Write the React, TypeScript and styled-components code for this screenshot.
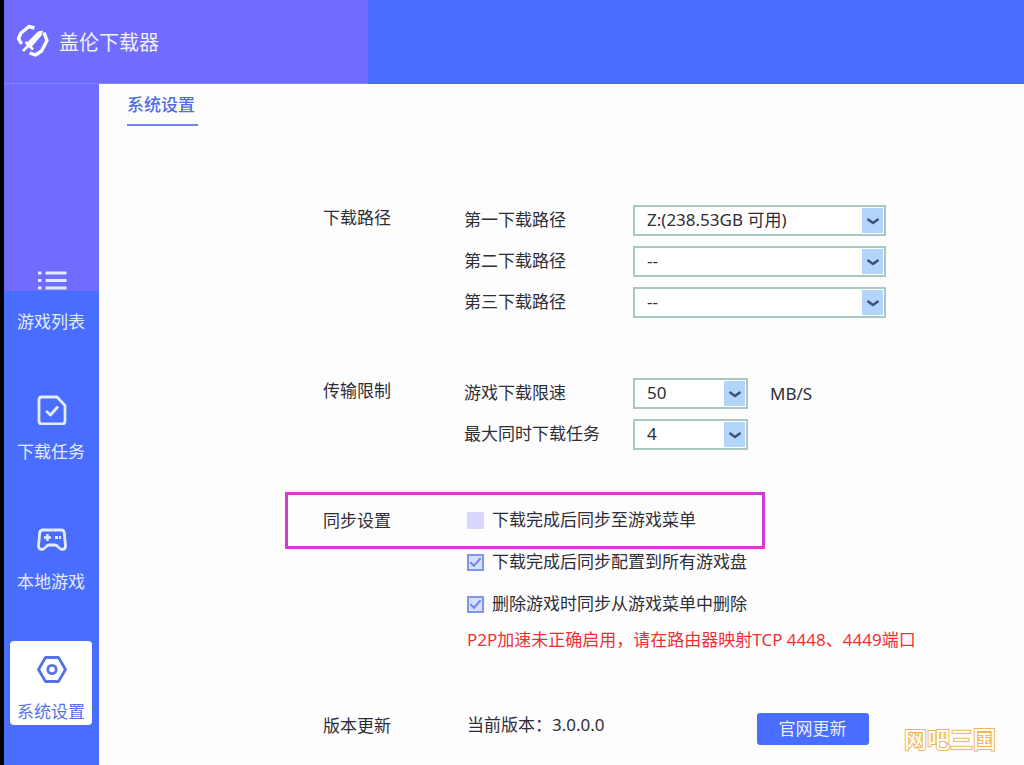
import React from 'react';
import styled, { createGlobalStyle } from 'styled-components';

const blue = '#486dff';
const violet = '#6f6cff';

const GlobalStyle = createGlobalStyle`
  *, *::before, *::after { box-sizing: border-box; }
  body {
    margin: 0;
    background: #fdfdfe;
    color: #2e2e36;
    font-family: 'Noto Sans', 'Noto Sans CJK SC', sans-serif;
    font-size: 17px;
    line-height: 24px;
  }
`;

const Page = styled.div`
  display: flex;
  flex-direction: column;
  min-height: 100vh;
  border-left: 4px solid #000;
`;

const Header = styled.header`
  display: flex;
  height: 84px;
  background: ${blue};
`;

const Brand = styled.div`
  display: flex;
  align-items: center;
  gap: 10px;
  width: 364px;
  padding-left: 12px;
  padding-bottom: 2px;
  background: ${violet};
  border-bottom: 1px solid #8587ff;
  color: #f1f1ff;
`;

const BrandName = styled.h1`
  margin: 0;
  padding-top: 4px;
  font-size: 20px;
  font-weight: 400;
  line-height: 28px;
`;

const Body = styled.div`
  display: flex;
  flex: 1;
`;

const Nav = styled.nav`
  display: flex;
  flex-direction: column;
  flex: none;
  gap: 46px;
  width: 95px;
  padding: 167px 7px 38px 6px;
  background: linear-gradient(${violet} 207px, ${blue} 207px);
`;

const NavItem = styled.a<{ $active?: boolean }>`
  display: flex;
  flex-direction: column;
  align-items: center;
  gap: 15px;
  height: 84px;
  padding-top: 12px;
  border-radius: 4px;
  background: ${p => (p.$active ? '#fff' : 'transparent')};
  color: ${p => (p.$active ? '#5673e6' : '#e4ebff')};
  text-decoration: none;
`;

const Main = styled.main`
  position: relative;
  flex: 1;
  min-width: 0;
  padding: 9px 28px 0;
`;

const Tab = styled.h2`
  width: 71px;
  margin: 0;
  padding-bottom: 7px;
  border-bottom: 2px solid #6d86e4;
  color: #4c6de4;
  font-size: 17px;
  font-weight: 500;
  line-height: 24px;
`;

const Settings = styled.form`
  padding: 79px 0 20px 196px;
`;

const Section = styled.section<{ $gap: number }>`
  position: relative;
  display: grid;
  grid-template-columns: 141px 1fr;
  margin-bottom: ${p => p.$gap}px;
`;

const SectionTitle = styled.h3`
  margin: 0;
  padding-top: 1px;
  font-size: 17px;
  font-weight: 400;
  line-height: 24px;
`;

const Fields = styled.div`
  display: flex;
  flex-direction: column;
  gap: 10px;
`;

const Field = styled.div`
  display: grid;
  grid-template-columns: 169px auto 1fr;
  align-items: center;
  height: 31px;
  white-space: nowrap;
`;

const FieldLabel = styled.label`
  padding-bottom: 2px;
`;

const SelectBox = styled.span<{ $wide?: boolean }>`
  position: relative;
  width: ${p => (p.$wide ? 253 : 115)}px;
  height: 31px;
`;

const Select = styled.select`
  appearance: none;
  display: block;
  width: 100%;
  height: 100%;
  padding: 0 26px 1px 12px;
  border: 2px solid #abc8c0;
  border-radius: 0;
  background: #fff;
  color: #2e2e36;
  font: inherit;
`;

const Arrow = styled.span`
  position: absolute;
  top: 3px;
  right: 3px;
  bottom: 3px;
  display: grid;
  place-items: center;
  width: 21px;
  background: #b3d5fc;
  pointer-events: none;
`;

const Unit = styled.span`
  padding-left: 22px;
`;

const Checks = styled.div`
  display: flex;
  flex-direction: column;
  gap: 18px;
  padding-left: 3px;
`;

const Check = styled.label`
  display: flex;
  align-items: center;
  gap: 8px;
  white-space: nowrap;
`;

const Tick = styled.input`
  appearance: none;
  display: grid;
  place-items: center;
  flex: none;
  width: 17px;
  height: 17px;
  margin: 0;
  background: #d9d6ff;

  &:checked {
    border: 2px solid #8294ee;
    background: #d5e0ff;
  }

  &:checked::before {
    content: '';
    width: 11px;
    height: 6px;
    border: solid #6f86e6;
    border-width: 0 0 2px 2px;
    transform: translateY(-1px) rotate(-48deg);
  }
`;

const Highlight = styled.div`
  position: absolute;
  top: -16px;
  left: -38px;
  width: 480px;
  height: 57px;
  border: 3px solid #d43bd3;
  pointer-events: none;
`;

const Warning = styled.p`
  margin: -6px 0 0;
  color: #ee3035;
  white-space: nowrap;
`;

const VersionRow = styled.div`
  display: flex;
  align-items: flex-start;
  gap: 152px;
  padding-left: 3px;
  white-space: nowrap;
`;

const UpdateButton = styled.button`
  width: 112px;
  height: 32px;
  padding: 0;
  border: 0;
  border-radius: 3px;
  background: ${blue};
  color: #e8edff;
  font: inherit;
`;

const Watermark = styled.div`
  position: absolute;
  right: 28px;
  bottom: 12px;
  color: #fffdf4;
  font-family: 'Noto Sans CJK SC', sans-serif;
  font-size: 23px;
  font-weight: 500;
  line-height: 30px;
  paint-order: stroke;
  -webkit-text-stroke: 2px #f0b45c;
`;

const Logo = () => (
  <svg width="33" height="34" viewBox="0 0 33 34" fill="none" aria-hidden="true">
    <g stroke="#fff" strokeWidth="3.4" strokeLinejoin="round">
      <path d="M18.500 4 13 2.500 5 9 2.500 14.500 5.500 20" />
      <path d="M28 8.500 31 16.500 25.500 27 19.500 31 13.500 29" />
    </g>
    <path d="M27 6.500 25.500 11.500 15.500 23 11 18.500 22 7.500Z" fill="#fff" />
    <path d="M9.500 18 17 25.500M12 22 7 27" stroke="#fff" strokeWidth="2.600" />
  </svg>
);

const iconProps = {
  width: 32, height: 32, viewBox: '-1 -1 32 32', fill: 'none',
  stroke: 'currentColor', strokeWidth: 2.8, strokeLinejoin: 'round' as const, 'aria-hidden': true,
};

const ListIcon = () => (
  <svg {...iconProps} strokeWidth={3}>
    <path d="M9.500 9H30.500M9.500 16.500H30.500M9.500 24H30.500M2 9H5.500M2 16.500H5.500M2 24H5.500" />
  </svg>
);

const TaskIcon = () => (
  <svg {...iconProps}>
    <path d="M5.500 3H21L29 11.500V27Q29 30 26 30H6Q3 30 3 27V6Q3 3 5.500 3Z" />
    <path d="M10 17 14.500 21 22 12.500" />
  </svg>
);

const GamepadIcon = () => (
  <svg {...iconProps}>
    <path d="M7 6H25Q28 6 28.300 9L29.500 22Q29.500 25.500 26 25.500C22.500 25.500 22.500 21 19 21H13C9.500 21 9.500 25.500 6 25.500Q2.500 25.500 2.500 22L3.700 9Q4 6 7 6Z" />
    <path d="M8 13.500H15M11.500 10V17" strokeWidth="2.400" />
    <path d="M19 13.500H22M23 13.500H25" strokeWidth="3" />
  </svg>
);

const SettingsIcon = () => (
  <svg {...iconProps}>
    <path d="M9.500 3.500H22.500L29.500 15.500 22.500 27.500H9.500L2.500 15.500Z" />
    <circle cx="16" cy="15.500" r="4.200" />
  </svg>
);

const navItems = [
  { label: '游戏列表', Icon: ListIcon },
  { label: '下载任务', Icon: TaskIcon },
  { label: '本地游戏', Icon: GamepadIcon },
  { label: '系统设置', Icon: SettingsIcon, active: true },
];

type DropdownProps = { id: string; label: string; value: string; wide?: boolean; unit?: string };

const Dropdown = ({ id, label, value, wide, unit }: DropdownProps) => (
  <Field>
    <FieldLabel htmlFor={id}>{label}</FieldLabel>
    <SelectBox $wide={wide}>
      <Select id={id} defaultValue={value}>
        <option value={value}>{value}</option>
      </Select>
      <Arrow>
        <svg width="14" height="8" viewBox="0 0 14 8" fill="none" aria-hidden="true">
          <path d="M1.500 2 7 6 12.500 2" stroke="#3d5275" strokeWidth="2.400" />
        </svg>
      </Arrow>
    </SelectBox>
    {unit && <Unit>{unit}</Unit>}
  </Field>
);

export default function App() {
  return (
    <>
      <GlobalStyle />
      <Page>
        <Header>
          <Brand>
            <Logo />
            <BrandName>盖伦下载器</BrandName>
          </Brand>
        </Header>
        <Body>
          <Nav>
            {navItems.map(({ label, Icon, active }) => (
              <NavItem key={label} href="#" $active={active}>
                <Icon />
                {label}
              </NavItem>
            ))}
          </Nav>
          <Main>
            <Tab>系统设置</Tab>
            <Settings>
              <Section $gap={60}>
                <SectionTitle>下载路径</SectionTitle>
                <Fields>
                  <Dropdown id="path1" label="第一下载路径" value="Z:(238.53GB 可用)" wide />
                  <Dropdown id="path2" label="第二下载路径" value="--" wide />
                  <Dropdown id="path3" label="第三下载路径" value="--" wide />
                </Fields>
              </Section>
              <Section $gap={58}>
                <SectionTitle>传输限制</SectionTitle>
                <Fields>
                  <Dropdown id="speed" label="游戏下载限速" value="50" unit="MB/S" />
                  <Dropdown id="tasks" label="最大同时下载任务" value="4" />
                </Fields>
              </Section>
              <Section $gap={61}>
                <SectionTitle>同步设置</SectionTitle>
                <Checks>
                  <Check><Tick type="checkbox" />下载完成后同步至游戏菜单</Check>
                  <Check><Tick type="checkbox" defaultChecked />下载完成后同步配置到所有游戏盘</Check>
                  <Check><Tick type="checkbox" defaultChecked />删除游戏时同步从游戏菜单中删除</Check>
                  <Warning>P2P加速未正确启用，请在路由器映射TCP 4448、4449端口</Warning>
                </Checks>
                <Highlight />
              </Section>
              <Section $gap={0}>
                <SectionTitle>版本更新</SectionTitle>
                <VersionRow>
                  <span>当前版本：3.0.0.0</span>
                  <UpdateButton type="button">官网更新</UpdateButton>
                </VersionRow>
              </Section>
            </Settings>
            <Watermark>网吧三国</Watermark>
          </Main>
        </Body>
      </Page>
    </>
  );
}
